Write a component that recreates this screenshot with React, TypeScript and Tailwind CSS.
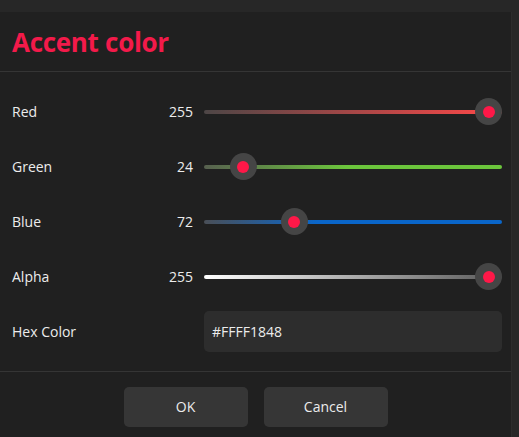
const rows = [
  { label: "Red", value: 255, track: "bg-[linear-gradient(to_right,#4d4646,#ff4848)]" },
  { label: "Green", value: 24, track: "bg-[linear-gradient(to_right,#57604f_0%,#6cc63c_48%,#6cc63c_100%)]" },
  { label: "Blue", value: 72, track: "bg-[linear-gradient(to_right,#4a4f57_0%,#0a66c9_38%,#0a66c9_100%)]" },
  { label: "Alpha", value: 255, track: "bg-[linear-gradient(to_right,#ffffff,#5a5a5a)]" },
];

const Slider = ({ value, track }: { value: number; track: string }) => {
  return (
    <div className="relative h-[27px] flex-1 flex items-center">
      <div className={`h-[4px] w-full rounded-full ${track}`} />
      <div
        className="absolute top-0 w-[27px] h-[27px] rounded-full bg-[#454545] flex items-center justify-center"
        style={{ left: `calc((100% - 27px) * ${value / 255})` }}
      >
        <div className="w-[12px] h-[12px] rounded-full bg-[#ff1848]" />
      </div>
    </div>
  );
};

export default function App() {
  return (
    <div
      className="w-[519px] h-[437px] bg-[#272727] flex flex-col text-[#ececec]"
      style={{ fontFamily: '"Open Sans", "Noto Sans", sans-serif' }}
    >
      <div className="h-[12px] shrink-0" />
      <div className="flex flex-1">
        <div className="w-[512px] bg-[#202020] flex flex-col border-r border-[#2c2c2c]">
          <div className="h-[60px] shrink-0 flex items-center px-[12px] border-b border-[#353535]">
            <h1 className="text-[26px] font-bold text-[#f31a4a] tracking-[-0.3px] leading-none">
              Accent color
            </h1>
          </div>

          <div className="flex flex-col pt-[12px] pl-[12px] pr-[9px]">
            {rows.map((r) => (
              <div key={r.label} className="h-[55px] flex items-center font-medium">
                <span className="w-[140px] text-[14px]">{r.label}</span>
                <span className="w-[41px] text-right text-[14px]">{r.value}</span>
                <div className="w-[11px]" />
                <Slider value={r.value} track={r.track} />
              </div>
            ))}
            <div className="h-[55px] flex items-center font-medium">
              <span className="w-[192px] text-[14px]">Hex Color</span>
              <div className="flex-1 h-[41px] rounded-[5px] bg-[#2d2d2d] flex items-center px-[8px] text-[14px]">
                #FFFF1848
              </div>
            </div>
          </div>

          <div className="mt-[12px] border-t border-[#353535]" />
          <div className="flex-1 flex items-center justify-center gap-[16px] pt-[4px]">
            <button className="w-[124px] h-[40px] rounded-[5px] bg-[#363636] text-[14px] font-medium text-[#ececec]">
              OK
            </button>
            <button className="w-[124px] h-[40px] rounded-[5px] bg-[#363636] text-[14px] font-medium text-[#ececec]">
              Cancel
            </button>
          </div>
        </div>
      </div>
    </div>
  );
}
